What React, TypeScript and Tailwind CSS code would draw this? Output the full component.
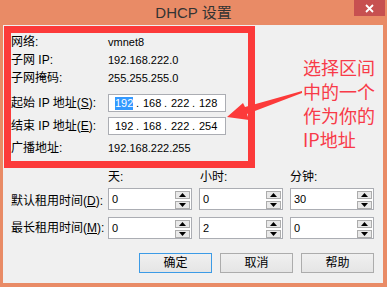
import React from 'react';

const FONT = "font-['Liberation_Sans','Noto_Sans_CJK_SC',sans-serif]";

const Tri: React.FC<{ down?: boolean }> = ({ down }) => (
    <svg width="7" height="4" viewBox="0 0 7 4">
        <polygon points={down ? '0,0 7,0 3.5,4' : '3.5,0 7,4 0,4'} fill="#000" />
    </svg>
);

const Spin: React.FC<{ value: string }> = ({ value }) => (
    <div className="w-[84px] h-[22px] bg-white border border-[#abadb3] flex justify-between">
        <span className="pl-[3px] pt-[3px] text-[11px] leading-[14px] text-black">{value}</span>
        <div className="flex flex-col gap-[2px] pt-[2px] pr-[1px]">
            <div className="w-[15px] h-[8px] border border-[#acacac] bg-[#e9e9e9] flex items-center justify-center">
                <Tri />
            </div>
            <div className="w-[15px] h-[8px] border border-[#acacac] bg-[#e9e9e9] flex items-center justify-center">
                <Tri down />
            </div>
        </div>
    </div>
);

const IpBox: React.FC<{ parts: string[]; selected?: boolean }> = ({ parts, selected }) => (
    <div className="w-[118px] h-[18px] bg-white border border-[#abadb3] flex items-center pl-[6px] text-[11px] text-black">
        {parts.map((p, i) => (
            <React.Fragment key={i}>
                {i > 0 && <span className="w-[10px] pl-[3px]">.</span>}
                <span
                    className={
                        i === 0 && selected
                            ? 'w-[18px] bg-[#3399ff] text-white leading-[13px]'
                            : 'w-[18px] leading-[13px]'
                    }
                >
                    {p}
                </span>
            </React.Fragment>
        ))}
    </div>
);

const Btn: React.FC<{ label: string; primary?: boolean }> = ({ label, primary }) => (
    <button
        className={
            primary
                ? 'w-[73px] h-[20px] border border-[#3c9be6] bg-gradient-to-b from-[#f0f0f0] to-[#e5e5e5] text-[12px] text-black flex items-center justify-center'
                : 'w-[73px] h-[20px] border border-[#acacac] bg-gradient-to-b from-[#f0f0f0] to-[#e5e5e5] text-[12px] text-black flex items-center justify-center'
        }
    >
        {label}
    </button>
);

const App: React.FC = () => {
    const rowLabel = 'text-[12px] text-black leading-[18px]';
    const rowValue = 'text-[11px] text-black leading-[18px]';

    return (
        <div className={`relative w-[387px] h-[287px] bg-[#e98b66] flex flex-col overflow-hidden ${FONT}`}>
            {/* title bar */}
            <div className="grid grid-cols-[1fr_auto_1fr] h-[25px]">
                <div />
                <div className="self-center text-[15px] leading-[18px] text-[#333333]">DHCP 设置</div>
                <div className="justify-self-end self-start mr-[2px] w-[31px] h-[16px] bg-[#c75050] flex items-center justify-center">
                    <svg width="9" height="9" viewBox="0 0 9 9">
                        <path d="M1 1 L8 8 M8 1 L1 8" stroke="#fff" strokeWidth="1.8" />
                    </svg>
                </div>
            </div>

            {/* client area */}
            <div className="flex-1 ml-[3px] mr-[4px] mb-[4px] bg-[#f0f0f0] pl-[8px] pt-[8px] flex flex-col">
                <div className="grid grid-cols-[97px_auto] items-center">
                    <span className={rowLabel}>网络:</span>
                    <span className={rowValue}>vmnet8</span>
                    <span className={rowLabel}>子网 IP:</span>
                    <span className={rowValue}>192.168.222.0</span>
                    <span className={rowLabel}>子网掩码:</span>
                    <span className={rowValue}>255.255.255.0</span>
                </div>
                <div className="grid grid-cols-[97px_auto] items-center mt-[7px] h-[18px]">
                    <span className={rowLabel}>
                        起始 IP 地址(<u>S</u>):
                    </span>
                    <IpBox parts={['192', '168', '222', '128']} selected />
                </div>
                <div className="grid grid-cols-[97px_auto] items-center mt-[5px] h-[18px]">
                    <span className={rowLabel}>
                        结束 IP 地址(<u>E</u>):
                    </span>
                    <IpBox parts={['192', '168', '222', '254']} />
                </div>
                <div className="grid grid-cols-[97px_auto] items-center mt-[4px]">
                    <span className={rowLabel}>广播地址:</span>
                    <span className={rowValue}>192.168.222.255</span>
                </div>

                {/* lease times */}
                <div className="flex mt-[12px] h-[16px] items-center text-[12px] text-black">
                    <span className="w-[97px]" />
                    <span className="w-[92px]">天:</span>
                    <span className="w-[90px]">小时:</span>
                    <span>分钟:</span>
                </div>
                <div className="flex items-center mt-[2px]">
                    <span className="w-[97px] text-[12px] text-black pt-[5px]">
                        默认租用时间(<u>D</u>):
                    </span>
                    <div className="flex gap-[7px]">
                        <Spin value="0" />
                        <Spin value="0" />
                        <Spin value="30" />
                    </div>
                </div>
                <div className="flex items-center mt-[7px]">
                    <span className="w-[97px] text-[12px] text-black">
                        最长租用时间(<u>M</u>):
                    </span>
                    <div className="flex gap-[7px]">
                        <Spin value="0" />
                        <Spin value="2" />
                        <Spin value="0" />
                    </div>
                </div>

                <div className="flex justify-end gap-[8px] mt-[14px] pr-[9px]">
                    <Btn label="确定" primary />
                    <Btn label="取消" />
                    <Btn label="帮助" />
                </div>
            </div>

            {/* red annotation */}
            <div className="absolute left-[4px] top-[26px] w-[251px] h-[142px] border-[7px] border-[#fc3a3a] pointer-events-none" />
            <svg className="absolute left-0 top-0 pointer-events-none" width="387" height="287" viewBox="0 0 387 287">
                <polygon
                    points="227,117 243,103 245,107 302,91 302,93 247,114 249,120"
                    fill="#fc3a3a"
                />
            </svg>
            <div className="absolute left-[303px] top-[55px] text-[18px] leading-[24px] text-[#f83a48] font-['Noto_Sans_CJK_SC',sans-serif] pointer-events-none">
                <div>选择区间</div>
                <div>中的一个</div>
                <div>作为你的</div>
                <div>IP地址</div>
            </div>
        </div>
    );
};

export default App;
